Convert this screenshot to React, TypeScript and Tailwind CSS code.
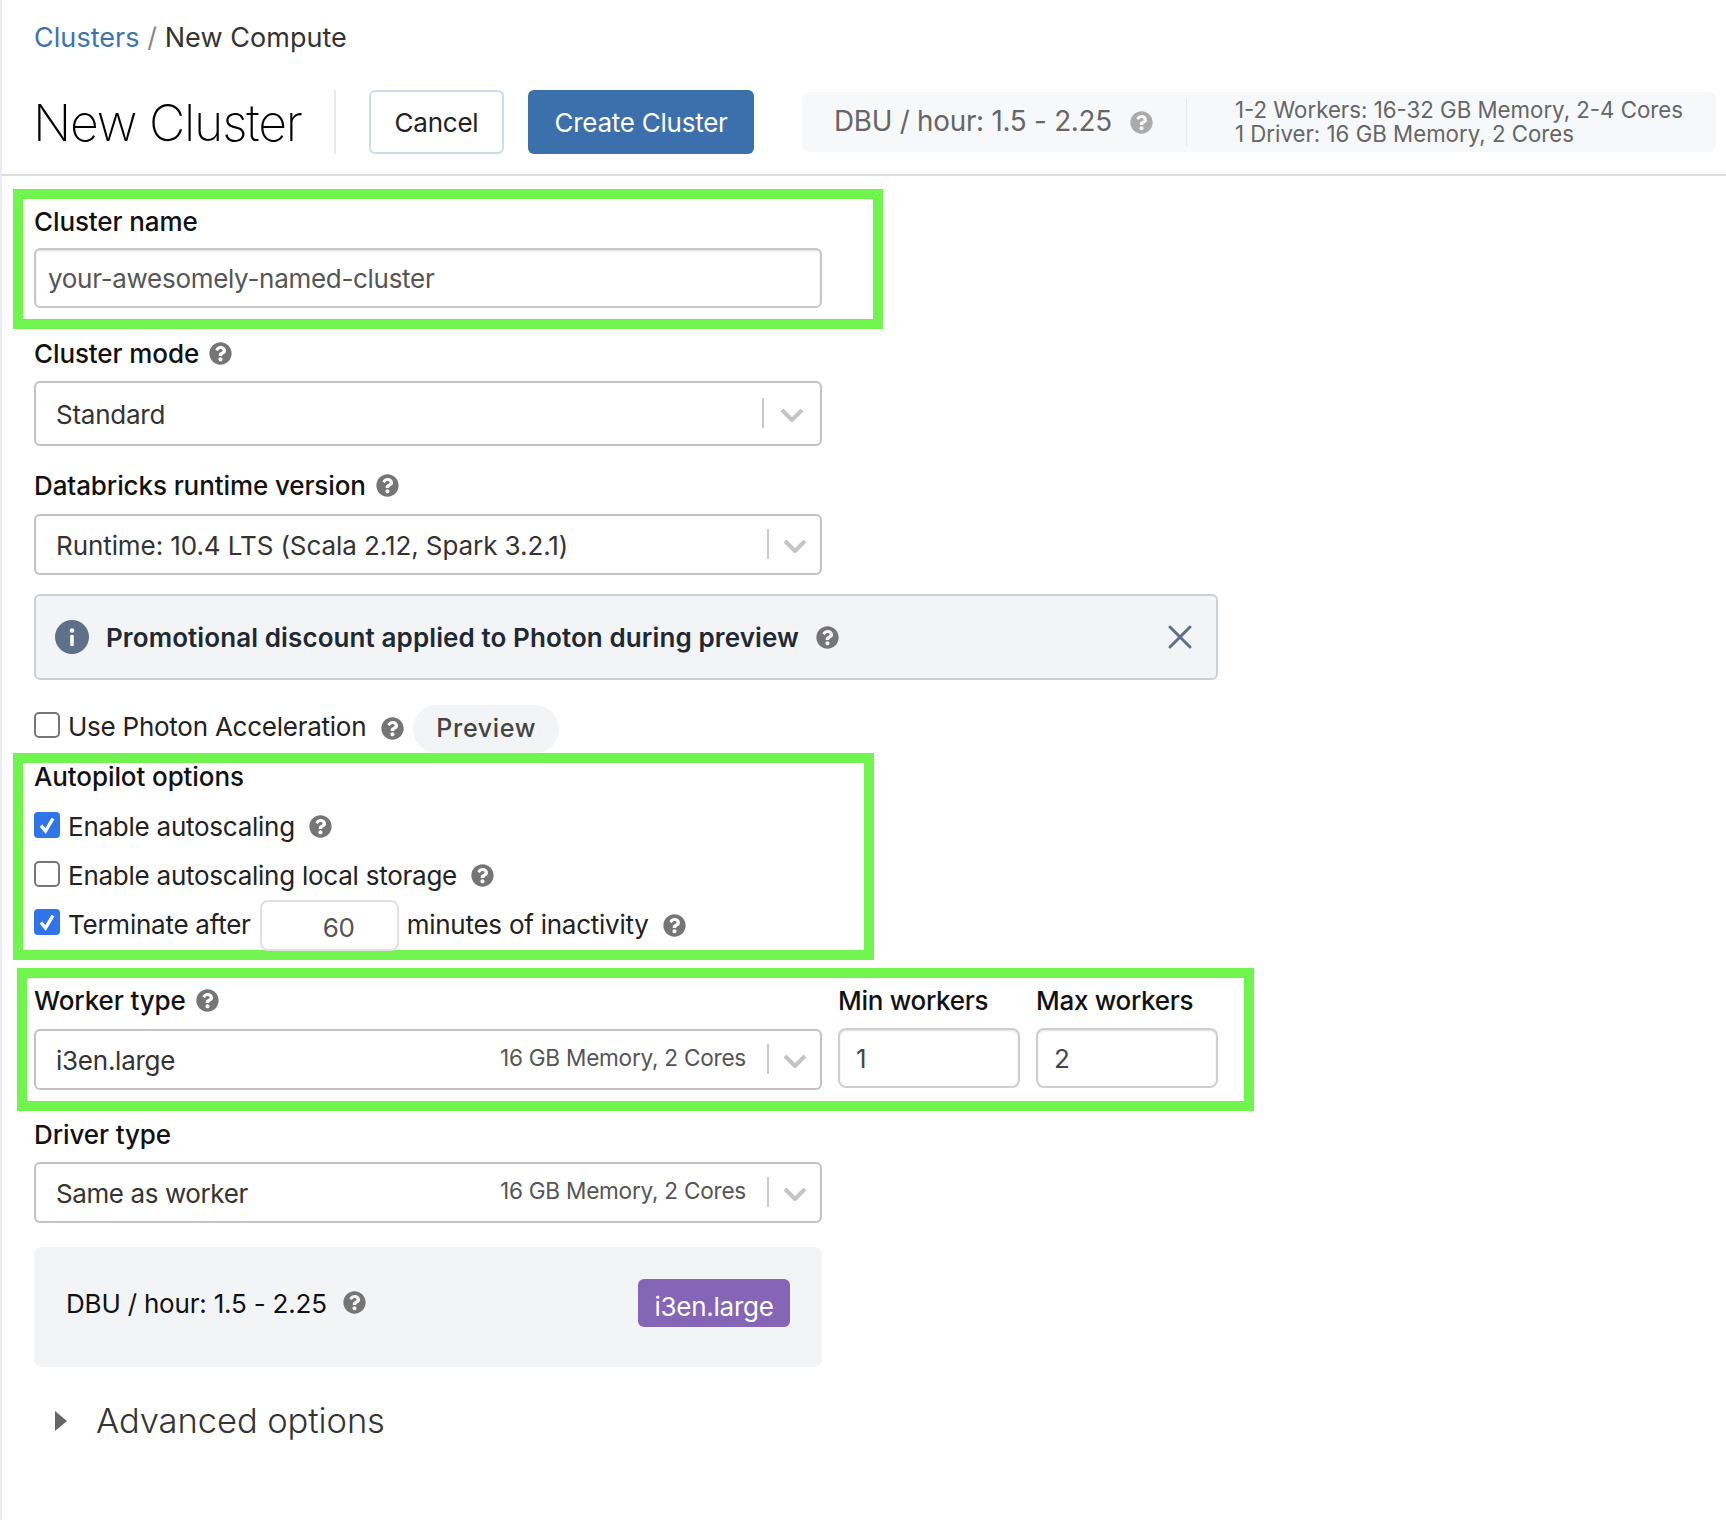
import React from 'react';
import { FaQuestionCircle } from 'react-icons/fa';
import { X } from 'lucide-react';

const Help: React.FC<{ className?: string }> = ({ className = 'text-[#757575]' }) => (
    <FaQuestionCircle className={`w-[23px] h-[23px] shrink-0 ${className}`} />
);

const Box: React.FC<{ checked?: boolean; className?: string }> = ({ checked, className = '' }) => (
    checked ? (
        <span className={`w-[26px] h-[26px] shrink-0 rounded-[4px] bg-[#2f74e8] flex items-center justify-center ${className}`}>
            <svg viewBox="0 0 26 26" className="w-[26px] h-[26px]" fill="none" stroke="white" strokeWidth="3.4">
                <path d="M7 13.5l4.5 5.5L19 6.5" />
            </svg>
        </span>
    ) : (
        <span className={`w-[26px] h-[26px] shrink-0 rounded-[5px] border-2 border-[#767676] bg-white ${className}`} />
    )
);

const Chevron = () => (
    <svg viewBox="0 0 24 14" className="w-[24px] h-[14px] text-[#c4c4c4]" fill="none" stroke="currentColor" strokeWidth="4">
        <path d="M2 2l10 10L22 2" />
    </svg>
);

const Select: React.FC<{ value: string; hint?: string; h: string; dividerGap: string; pr?: string; valueClass?: string }> = ({ value, hint, h, dividerGap, pr = 'pr-[13px]', valueClass = '' }) => (
    <div className={`${h} w-[788px] flex items-center pl-[20px] ${pr} rounded-[6px] border-2 border-[#c2c2c2] bg-white text-[26px] text-[#333]`}>
        <span className={`flex-1 pt-[2px] ${valueClass}`}>{value}</span>
        {hint && <span className="text-[22.6px] text-[#555] mb-[4px] mr-[21px]">{hint}</span>}
        <span className="w-[2px] h-[30px] bg-[#c9c9c9] mb-[2px]" />
        <span className={`${dividerGap} mt-[2px] flex`}><Chevron /></span>
    </div>
);

const Label: React.FC<{ children: React.ReactNode; help?: boolean }> = ({ children, help }) => (
    <div className="flex items-center gap-[10px] h-[32px] text-[26px] font-medium text-[#111] tracking-[-0.1px]">
        <span>{children}</span>
        {help && <Help />}
    </div>
);

const App: React.FC = () => {
    return (
        <div className="w-[1726px] h-[1520px] bg-white border-l-2 border-[#e8edf2] font-['Inter',sans-serif] tracking-[-0.25px] text-[#222] overflow-hidden">
            <div className="h-[176px] border-b-2 border-[#dedede] pl-[32px] pt-[20px]">
                <div className="text-[27px] leading-[36px] text-[#333] tracking-[0.05px]">
                    <span className="text-[#3b73af]">Clusters</span>
                    <span className="text-[#888]"> / </span>
                    New Compute
                </div>
                <div className="flex items-center mt-[34px]">
                    <h1 className="text-[50px] font-extralight tracking-[-1.2px] leading-[64px] pt-[1px] -ml-[1px] text-black w-[303px] h-[64px] border-r-2 border-[#e8e8e8]">New Cluster</h1>
                    <button className="ml-[33px] w-[135px] h-[64px] rounded-[6px] border-2 border-[#cfdbe6] text-[26px] text-[#222] bg-white">Cancel</button>
                    <button className="ml-[24px] w-[226px] h-[64px] rounded-[6px] bg-[#3b70ad] text-[26px] text-white">Create Cluster</button>
                    <div className="ml-[48px] w-[914px] h-[60px] rounded-[8px] bg-[#f7f8fa] flex items-center text-[#666]">
                        <span className="ml-[32px] text-[27.8px]">DBU / hour: 1.5 - 2.25</span>
                        <Help className="text-[#aaaaaa] ml-[18px]" />
                        <span className="w-px h-[48px] bg-[#e6e7e9] ml-[33px]" />
                        <div className="ml-[48px] text-[22.25px] leading-[24px] tracking-normal">
                            <div>1-2 Workers: 16-32 GB Memory, 2-4 Cores</div>
                            <div>1 Driver: 16 GB Memory, 2 Cores</div>
                        </div>
                    </div>
                </div>
            </div>

            <div className="pl-[32px]">
                <div className="-ml-[21px] mt-[13px] w-[870px] h-[140px] border-[10px] border-[#72f44e] pl-[11px] pt-[6px]">
                    <Label>Cluster name</Label>
                    <div className="mt-[11px] w-[788px] h-[60px] flex items-center pl-[12px] rounded-[6px] border-2 border-[#c8c8c8] shadow-[inset_0_1px_2px_rgba(0,0,0,0.15)] text-[26px] tracking-[-0.3px] text-[#555]">your-awesomely-named-cluster</div>
                </div>

                <div className="mt-[8px]"><Label help>Cluster mode</Label></div>
                <div className="mt-[12px]"><Select value="Standard" h="h-[65px]" dividerGap="ml-[16px]" pr="pr-[16px]" /></div>

                <div className="mt-[23px]"><Label help>Databricks runtime version</Label></div>
                <div className="mt-[13px]"><Select value="Runtime: 10.4 LTS (Scala 2.12, Spark 3.2.1)" valueClass="tracking-[-0.08px]" h="h-[61px]" dividerGap="ml-[14px]" /></div>

                <div className="mt-[19px] w-[1184px] h-[86px] rounded-[6px] border-2 border-[#c8d0d8] bg-[#f3f4f6] flex items-center pl-[19px] pr-[16px]">
                    <svg viewBox="0 0 34 34" className="w-[34px] h-[34px] shrink-0">
                        <circle cx="17" cy="17" r="17" fill="#5e7189" />
                        <circle cx="17" cy="10.5" r="2.2" fill="white" />
                        <rect x="15.2" y="15" width="3.6" height="11" rx="0.8" fill="white" />
                    </svg>
                    <span className="ml-[17px] text-[26px] font-semibold tracking-[0.1px] text-[#1f2933]">Promotional discount applied to Photon during preview</span>
                    <span className="ml-[17px]"><Help /></span>
                    <X className="ml-auto w-[40px] h-[40px] text-[#5e7189]" strokeWidth={1.8} />
                </div>

                <div className="mt-[25px] flex items-center h-[48px]">
                    <Box className="mb-[9px]" />
                    <span className="ml-[8px] text-[26px] text-[#222] mb-[6px]">Use Photon Acceleration</span>
                    <span className="ml-[15px] mb-[2px]"><Help /></span>
                    <span className="ml-[9px] h-[48px] w-[146px] rounded-full bg-[#f3f4f6] flex items-center justify-center text-[25px] font-medium tracking-[0.7px] text-[#444]">Preview</span>
                </div>

                <div className="-ml-[21px] w-[861px] h-[207px] border-[10px] border-[#72f44e] pl-[11px]">
                    <div className="text-[26px] leading-[28px] font-medium text-[#111] tracking-[-0.1px]">Autopilot options</div>
                    <div className="mt-[19px] flex items-center h-[32px] text-[26px]">
                        <Box checked className="mb-[2px]" /><span className="ml-[8px]">Enable autoscaling</span><span className="ml-[14px]"><Help /></span>
                    </div>
                    <div className="mt-[17px] flex items-center h-[32px] text-[26px]">
                        <Box className="mb-[2px]" /><span className="ml-[8px]">Enable autoscaling local storage</span><span className="ml-[14px]"><Help /></span>
                    </div>
                    <div className="mt-[9px] flex items-center h-[51px] text-[26px]">
                        <Box checked className="mb-[8px]" /><span className="ml-[8px] mb-[2px]">Terminate after</span>
                        <span className="ml-[9px] w-[139px] h-[51px] rounded-[8px] border-2 border-[#e0e0e0] flex items-center justify-center text-[#555] pt-[4px] pl-[19px]">60</span>
                        <span className="ml-[8px] mb-[2px]">minutes of inactivity</span>
                        <span className="ml-[14px]"><Help /></span>
                    </div>
                </div>

                <div className="-ml-[17px] mt-[8px] w-[1237px] h-[143px] border-[10px] border-[#72f44e] pl-[7px] pt-[6px] flex gap-[16px]">
                    <div>
                        <Label help>Worker type</Label>
                        <div className="mt-[13px]"><Select value="i3en.large" hint="16 GB Memory, 2 Cores" h="h-[61px]" dividerGap="ml-[14px]" /></div>
                    </div>
                    <div>
                        <Label><span className="tracking-[-0.3px]">Min workers</span></Label>
                        <div className="mt-[12px] w-[182px] h-[60px] flex items-center pl-[16px] rounded-[8px] border-2 border-[#cfcfcf] shadow-[inset_0_1px_2px_rgba(0,0,0,0.12)] text-[26px] text-[#444]">1</div>
                    </div>
                    <div>
                        <Label><span className="tracking-[-0.3px]">Max workers</span></Label>
                        <div className="mt-[12px] w-[182px] h-[60px] flex items-center pl-[16px] rounded-[8px] border-2 border-[#cfcfcf] shadow-[inset_0_1px_2px_rgba(0,0,0,0.12)] text-[26px] text-[#444]">2</div>
                    </div>
                </div>

                <div className="mt-[7px]"><Label>Driver type</Label></div>
                <div className="mt-[12px]"><Select value="Same as worker" valueClass="tracking-[-0.4px]" hint="16 GB Memory, 2 Cores" h="h-[61px]" dividerGap="ml-[14px]" /></div>

                <div className="mt-[24px] w-[788px] h-[120px] rounded-[8px] bg-[#f3f4f6] flex items-center pl-[32px] pr-[32px] pb-[9px] text-[26px] text-[#111]">
                    <span className="pt-[2px] tracking-[-0.2px]">DBU / hour: 1.5 - 2.25</span>
                    <span className="ml-[16px] flex"><Help /></span>
                    <span className="ml-auto w-[152px] h-[48px] rounded-[6px] bg-[#8565b5] text-white flex items-center justify-center pt-[7px]">i3en.large</span>
                </div>

                <div className="mt-[34px] flex items-center h-[40px]">
                    <span className="ml-[21px] w-0 h-0 border-y-[10px] border-y-transparent border-l-[12px] border-l-[#666]" />
                    <span className="ml-[29px] text-[34.5px] font-light tracking-[-0.07px] text-[#333]">Advanced options</span>
                </div>
            </div>
        </div>
    );
};
export default App;
